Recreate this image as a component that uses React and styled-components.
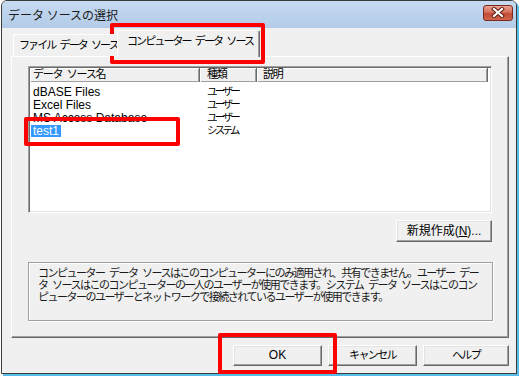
import styled, { createGlobalStyle } from 'styled-components';

const GlobalStyle = createGlobalStyle`
  html, body {
    margin: 0;
    padding: 0;
  }
  body {
    width: 520px;
    height: 377px;
    overflow: hidden;
    background: #ffffff;
    font-family: "Liberation Sans", "Noto Sans CJK JP", sans-serif;
    font-size: 12px;
    color: #000;
  }
`;

const Screen = styled.div`
  position: relative;
  width: 520px;
  height: 377px;
`;

const Window = styled.div`
  box-sizing: border-box;
  width: 516px;
  height: 374px;
  margin-left: 1px;
  border: 1px solid #3b3b3b;
  border-radius: 6px 6px 0 0;
  background: #f0f0f0;
  box-shadow: 2px 2px 0 #56bde8;
  display: flex;
  flex-direction: column;
  overflow: hidden;
`;

const TitleBar = styled.div`
  height: 27px;
  flex: none;
  display: flex;
  align-items: center;
  justify-content: space-between;
  padding: 0 3px 0 6px;
  background: linear-gradient(#c6daf1, #b3cbe8);
`;

const Title = styled.span`
  font-family: "Noto Sans CJK JP", sans-serif;
  font-size: 12px;
  color: #1a1a1a;
`;

const CloseButton = styled.div`
  width: 30px;
  height: 16px;
  margin-top: -4px;
  box-sizing: border-box;
  border: 1px solid #7a2a1e;
  border-radius: 3px;
  background: linear-gradient(#eaa08f 0%, #d4705b 45%, #c24a34 55%, #d0664c 100%);
  display: flex;
  align-items: center;
  justify-content: center;
`;

const Body = styled.div`
  flex: 1;
  display: flex;
  flex-direction: column;
  padding: 2px 7px 0 9px;
`;

const TabRow = styled.div`
  display: flex;
  align-items: flex-end;
  height: 26px;
  padding-left: 2px;
`;

const Tab = styled.div`
  position: relative;
  box-sizing: border-box;
  white-space: nowrap;
  font-size: 11px;
  letter-spacing: -1.9px;
  word-spacing: 3px;
  background: #f0f0f0;
  border-top: 1px solid #fff;
  border-left: 1px solid #fff;
  border-right: 1px solid #696969;
  border-radius: 2px 2px 0 0;
  box-shadow: inset -1px 0 0 #a0a0a0;
  overflow: hidden;
  width: ${({ $w }) => $w}px;
  height: ${({ $active }) => ($active ? 27 : 22)}px;
  margin: ${({ $active }) => ($active ? '0 0 -1px -2px' : '0')};
  padding: ${({ $active }) => ($active ? '4px 0 0 9px' : '4px 0 0 5px')};
  z-index: ${({ $active }) => ($active ? 2 : 1)};
  line-height: 13px;
`;

const Panel = styled.div`
  box-sizing: border-box;
  height: 282px;
  border-top: 1px solid #fff;
  border-left: 1px solid #fff;
  border-right: 1px solid #696969;
  border-bottom: 1px solid #696969;
  box-shadow: inset -1px -1px 0 #a0a0a0;
  padding: 9px 16px 0 16px;
  display: flex;
  flex-direction: column;
`;

const ListView = styled.div`
  box-sizing: border-box;
  height: 147px;
  padding: 1px;
  background: #fff;
  border: 1px solid;
  border-color: #a0a0a0 #fff #fff #a0a0a0;
  box-shadow: inset 1px 1px 0 #696969, inset -1px -1px 0 #e3e3e3;
`;

const Columns = styled.div`
  display: grid;
  grid-template-columns: 170px 57px 231px;
`;

const HeaderCell = styled.div`
  box-sizing: border-box;
  height: 14px;
  line-height: 13px;
  font-size: 11px;
  letter-spacing: -1.3px;
  word-spacing: 3px;
  padding-left: ${({ $pad }) => $pad}px;
  background: #f0f0f0;
  border-right: 1px solid #696969;
  box-shadow: inset 1px 1px 0 #fff, inset -1px -1px 0 #a0a0a0;
  white-space: nowrap;
`;

const Rows = styled.div`
  padding-top: 3px;
`;

const Cell = styled.div`
  height: 13px;
  line-height: 13px;
  padding-left: ${({ $pad }) => $pad}px;
  white-space: nowrap;
  font-size: ${({ $kana }) => ($kana ? '10.5px' : '12px')};
  letter-spacing: ${({ $kana }) => ($kana ? '-2.7px' : '0')};
`;

const Highlight = styled.span`
  display: inline-block;
  margin-left: -2px;
  padding: 0 2px;
  line-height: 12px;
  margin-top: 1px;
  background: ${({ $on }) => ($on ? '#3399ff' : 'transparent')};
  color: ${({ $on }) => ($on ? '#fff' : '#000')};
`;

const ButtonRow = styled.div`
  display: flex;
  justify-content: flex-end;
  gap: 6px;
  margin-top: ${({ $mt }) => $mt}px;
`;

const Button = styled.div`
  box-sizing: border-box;
  width: ${({ $w }) => $w}px;
  height: ${({ $h }) => $h || 22}px;
  background: #f0f0f0;
  border: 1px solid;
  border-color: #fff #696969 #696969 #fff;
  box-shadow: inset -1px -1px 0 #a0a0a0, inset 1px 1px 0 #e3e3e3;
  display: flex;
  align-items: center;
  justify-content: center;
  white-space: nowrap;
  line-height: 13px;
  font-size: ${({ $kana }) => ($kana ? '11px' : '12px')};
  letter-spacing: ${({ $kana }) => ($kana ? '-1.6px' : '0')};
`;

const InfoBox = styled.div`
  box-sizing: border-box;
  height: 59px;
  margin-top: 20px;
  margin-right: -1px;
  border: 1px solid #a0a0a0;
  box-shadow: 1px 1px 0 #fff, inset 1px 1px 0 #fff;
  padding: 4px 0 0 9px;
  font-size: 11px;
  letter-spacing: -1.5px;
  word-spacing: 3px;
  line-height: 12px;
  white-space: nowrap;
  color: #1a1a1a;
`;

const Marker = styled.div`
  position: absolute;
  box-sizing: border-box;
  border: 4px solid #ff0000;
  border-radius: 2px;
  left: ${({ $x }) => $x}px;
  top: ${({ $y }) => $y}px;
  width: ${({ $w }) => $w}px;
  height: ${({ $h }) => $h}px;
  pointer-events: none;
`;

const rows = [
  { name: 'dBASE Files', type: 'ユーザー' },
  { name: 'Excel Files', type: 'ユーザー' },
  { name: 'MS Access Database', type: 'ユーザー' },
  { name: 'test1', type: 'システム', selected: true },
];

function CloseIcon() {
  return (
    <svg width="14" height="11" viewBox="0 0 14 11">
      <path d="M3 2 L11 9 M11 2 L3 9" stroke="#5a1a10" strokeWidth="4" strokeLinecap="square" />
      <path d="M3 2 L11 9 M11 2 L3 9" stroke="#ffffff" strokeWidth="2.2" strokeLinecap="square" />
    </svg>
  );
}

export default function App() {
  return (
    <Screen>
      <GlobalStyle />
      <Window>
        <TitleBar>
          <Title>データ ソースの選択</Title>
          <CloseButton>
            <CloseIcon />
          </CloseButton>
        </TitleBar>
        <Body>
          <TabRow>
            <Tab $w={106}>ファイル データ ソース</Tab>
            <Tab $w={143} $active>コンピューター データ ソース</Tab>
          </TabRow>
          <Panel>
            <ListView>
              <Columns>
                <HeaderCell $pad={3}>データ ソース名</HeaderCell>
                <HeaderCell $pad={7}>種類</HeaderCell>
                <HeaderCell $pad={6}>説明</HeaderCell>
              </Columns>
              <Rows>
                {rows.map((r) => (
                  <Columns key={r.name}>
                    <Cell $pad={3}>
                      <Highlight $on={r.selected}>{r.name}</Highlight>
                    </Cell>
                    <Cell $pad={7} $kana>{r.type}</Cell>
                    <Cell $pad={6} />
                  </Columns>
                ))}
              </Rows>
            </ListView>
            <ButtonRow $mt={7}>
              <Button $w={96}>
                新規作成(<u>N</u>)...
              </Button>
            </ButtonRow>
            <InfoBox>
              コンピューター データ ソースはこのコンピューターにのみ適用され、共有できません。ユーザー デー
              <br />
              タ ソースはこのコンピューターの一人のユーザーが使用できます。システム データ ソースはこのコン
              <br />
              ピューターのユーザーとネットワークで接続されているユーザーが使用できます。
            </InfoBox>
          </Panel>
          <ButtonRow $mt={7}>
            <Button $w={89} $h={21}>OK</Button>
            <Button $w={89} $h={21} $kana>キャンセル</Button>
            <Button $w={86} $h={21} $kana>ヘルプ</Button>
          </ButtonRow>
        </Body>
      </Window>
      <Marker $x={110} $y={23} $w={155} $h={41} />
      <Marker $x={24} $y={117} $w={156} $h={29} />
      <Marker $x={218} $y={333} $w={119} $h={41} />
    </Screen>
  );
}
